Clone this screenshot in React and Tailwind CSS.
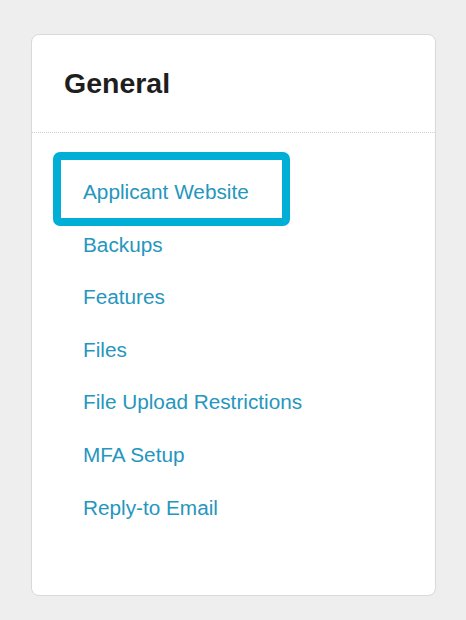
export default function App() {
  const links = [
    "Applicant Website",
    "Backups",
    "Features",
    "Files",
    "File Upload Restrictions",
    "MFA Setup",
    "Reply-to Email",
  ];
  return (
    <div
      className="min-h-screen w-full bg-[#eeeeee] pl-[31px] pt-[34px]"
      style={{ fontFamily: '"Liberation Sans", Arial, sans-serif' }}
    >
      <div className="w-[405px] rounded-[8px] border border-[#d9d9d9] bg-white">
        <div className="border-b border-dotted border-[#cfcfcf] px-8 pb-[33px] pt-8">
          <h1 className="text-[28.5px] font-bold leading-[32px] text-[#1e1e1e]">General</h1>
        </div>
        <ul className="pb-[61px] pl-[51px] pt-[33px]">
          {links.map((l, i) => (
            <li key={l} className="relative">
              {i === 0 && (
                <span className="pointer-events-none absolute left-[-30px] top-[-14px] h-[74px] w-[237px] rounded-[7px] border-[8px] border-[#00aed6]" />
              )}
              <a
                href="#"
                className="block py-3 text-[20.75px] leading-[28.6px] text-[#2596be]"
              >
                {l}
              </a>
            </li>
          ))}
        </ul>
      </div>
    </div>
  );
}
